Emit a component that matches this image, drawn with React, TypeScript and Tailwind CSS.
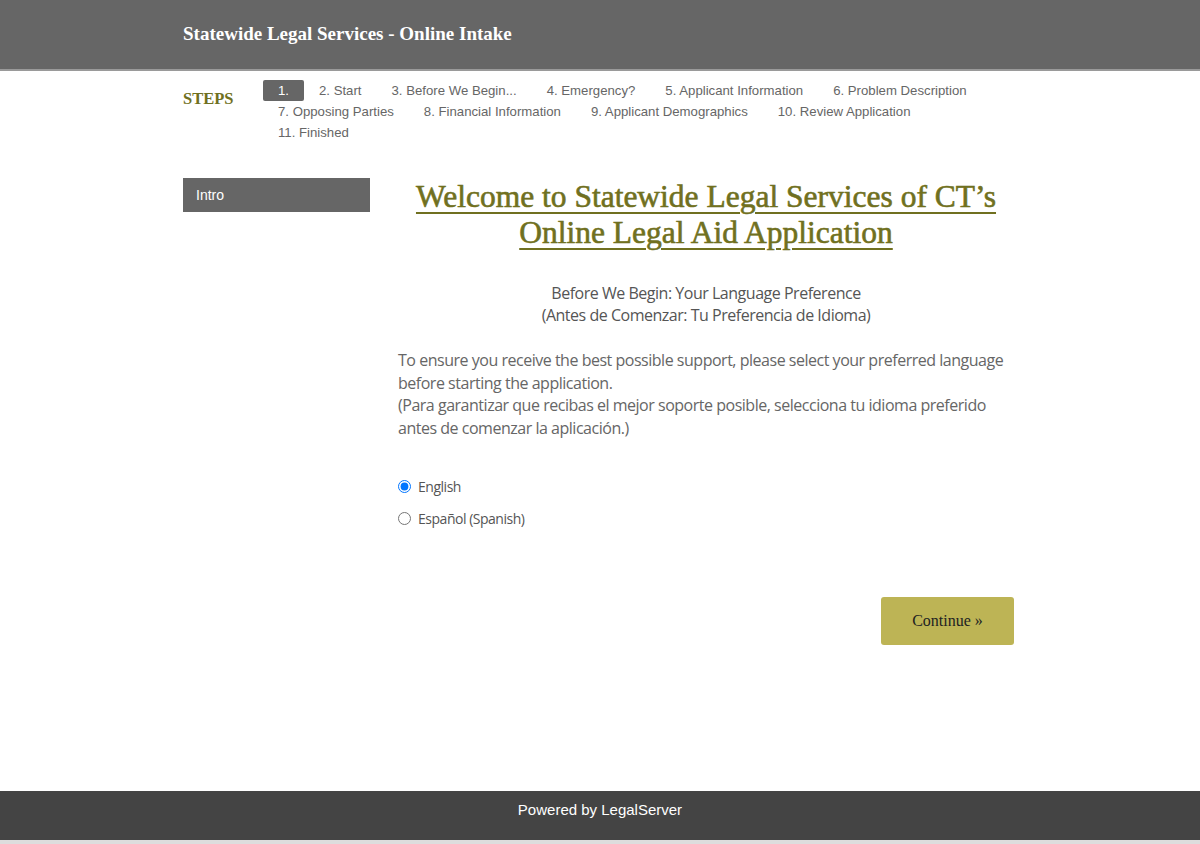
const steps = [
  "1.",
  "2. Start",
  "3. Before We Begin...",
  "4. Emergency?",
  "5. Applicant Information",
  "6. Problem Description",
  "7. Opposing Parties",
  "8. Financial Information",
  "9. Applicant Demographics",
  "10. Review Application",
  "11. Finished",
];

const serif = { fontFamily: '"Liberation Serif", "DejaVu Serif", serif' };

export default function App() {
  return (
    <div className="flex h-[844px] flex-col bg-white font-['Liberation_Sans',Arial,sans-serif]">
      <header className="h-[71px] border-b-2 border-[#9a9a9a] bg-[#666666]">
        <div className="mx-auto flex h-full w-[834px] items-center">
          <h1 className="text-[19px] font-bold text-white" style={serif}>
            Statewide Legal Services - Online Intake
          </h1>
        </div>
      </header>

      <main className="flex-1">
        <div className="mx-auto w-[834px]">
          {/* steps */}
          <div className="flex pt-[9px]">
            <div className="w-[80px] pt-[7px] text-[16.5px] font-bold text-[#6f7020]" style={serif}>
              STEPS
            </div>
            <ul className="flex flex-1 flex-wrap text-[13.2px] leading-[21px] text-[#666]">
              {steps.map((s, i) => (
                <li
                  key={s}
                  className={
                    i === 0
                      ? "rounded-[2px] bg-[#666] px-[15px] text-white"
                      : "px-[15px]"
                  }
                >
                  {s}
                </li>
              ))}
            </ul>
          </div>

          <div className="mt-[35px] flex gap-[28px]">
            <aside className="w-[187px]">
              <div className="h-[34px] bg-[#666] pl-[13px] text-[14px] leading-[34px] text-white">
                Intro
              </div>
            </aside>

            <section className="w-[616px] font-['Open_Sans',sans-serif] tracking-[-0.03em]">
              <h2
                className="mt-[1px] text-center text-[31.5px] leading-[36px] tracking-normal text-[#707020] underline decoration-[2px] underline-offset-[5px] [-webkit-text-stroke:0.6px_#707020]"
                style={serif}
              >
                Welcome to Statewide Legal Services of CT’s
                <br />
                Online Legal Aid Application
              </h2>

              <p className="mt-[31px] text-center text-[16px] leading-[22px] text-[#555]">
                Before We Begin: Your Language Preference
                <br />
                (Antes de Comenzar: Tu Preferencia de Idioma)
              </p>

              <p className="mt-[23px] text-[16px] leading-[22.5px] text-[#666]">
                To ensure you receive the best possible support, please select your preferred language
                before starting the application.
                <br />
                (Para garantizar que recibas el mejor soporte posible, selecciona tu idioma preferido
                antes de comenzar la aplicación.)
              </p>

              <div className="mt-[37px] flex flex-col gap-[11px] text-[14px] text-[#555]">
                <label className="flex items-center gap-[7px]">
                  <input type="radio" name="lang" defaultChecked className="m-0 h-[13px] w-[13px]" />
                  English
                </label>
                <label className="flex items-center gap-[7px]">
                  <input type="radio" name="lang" className="m-0 h-[13px] w-[13px]" />
                  Español (Spanish)
                </label>
              </div>

              <div className="mt-[68px] flex justify-end">
                <button
                  className="h-[48px] w-[133px] rounded-[3px] bg-[#bdb455] text-[16px] tracking-normal text-[#222]"
                  style={serif}
                >
                  Continue »
                </button>
              </div>
            </section>
          </div>
        </div>
      </main>

      <footer className="flex h-[49px] items-center justify-center bg-[#444] pb-[10px] text-[15px] text-white">
        Powered by LegalServer
      </footer>
      <div className="h-[4px] bg-[#dddddd]" />
    </div>
  );
}
